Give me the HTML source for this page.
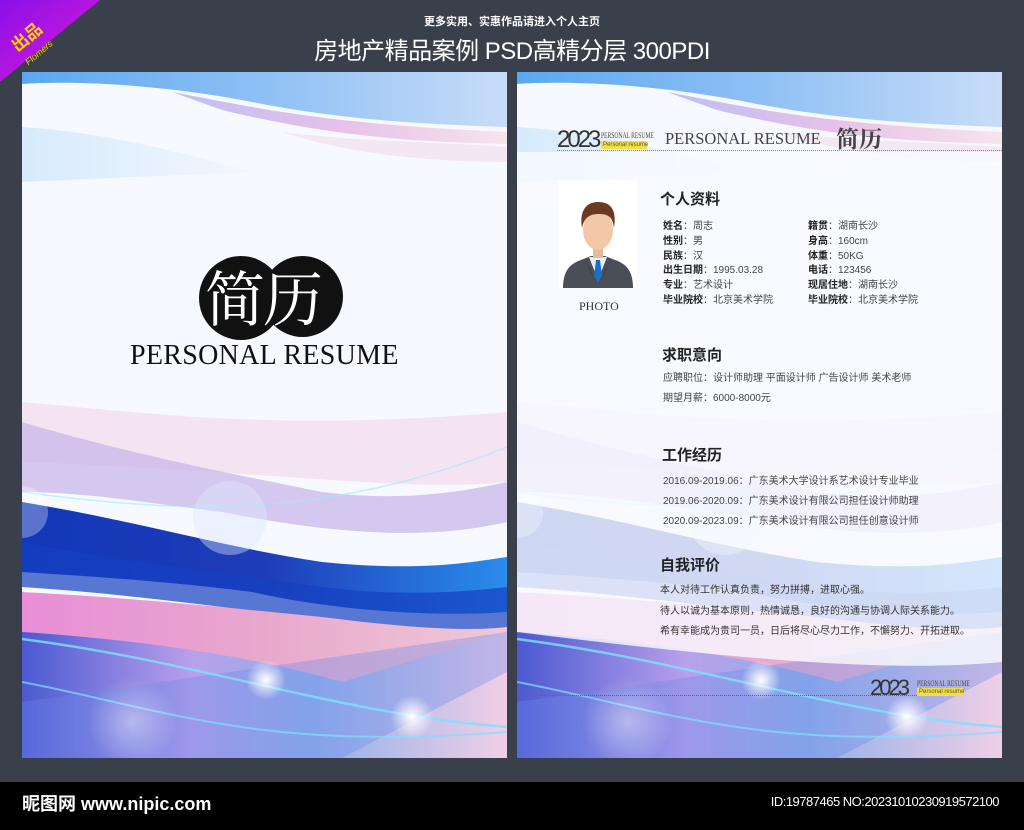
<!DOCTYPE html>
<html><head><meta charset="utf-8">
<style>
*{margin:0;padding:0;box-sizing:border-box}
body{width:1024px;height:830px;background:#3a404b;position:relative;overflow:hidden;font-family:"Liberation Sans","Noto Sans CJK SC",sans-serif}
.abs{position:absolute;white-space:nowrap}
.panel{position:absolute;top:72px;width:485px;height:686px;overflow:hidden}
.serif{font-family:"Liberation Serif","Noto Serif CJK SC",serif}
.t{color:#444;font-size:10px}
.t b{color:#222}
.h{font-size:15px;font-weight:bold;color:#222}
</style></head><body>

<svg class="abs" style="left:0;top:0" width="110" height="90">
<defs><linearGradient id="rb" x1="0" y1="0" x2="1" y2="1"><stop offset="0" stop-color="#8a10e8"/><stop offset="1" stop-color="#e01ad8"/></linearGradient></defs>
<polygon points="0,0 100,0 0,82" fill="url(#rb)"/>
<text x="10" y="48" transform="rotate(-40 20 40)" font-size="17" font-weight="bold" fill="#ffd000" font-family="Noto Sans CJK SC">出品</text>
<text x="22" y="62" transform="rotate(-40 30 55)" font-size="9" font-style="italic" fill="#ffd000" font-family="Liberation Sans">Flomers</text>
</svg>

<div class="abs" style="left:0;width:1024px;top:13px;text-align:center;color:#fff;font-size:11px;font-weight:bold">更多实用、实惠作品请进入个人主页</div>
<div class="abs" style="left:0;width:1024px;top:31px;text-align:center;color:#fff;font-size:24px;letter-spacing:-.5px">房地产精品案例 PSD高精分层 300PDI</div>

<svg width="0" height="0" style="position:absolute">
<defs>
<linearGradient id="top" x1="0" y1="0" x2="1" y2="0"><stop offset="0" stop-color="#5aa8f0"/><stop offset=".5" stop-color="#8fc0f4"/><stop offset="1" stop-color="#c8dcf8"/></linearGradient>
<linearGradient id="pinkTop" x1="0" y1="0" x2="1" y2="0"><stop offset="0" stop-color="#a0a8f0"/><stop offset=".5" stop-color="#e0a8e0"/><stop offset="1" stop-color="#f6dce4"/></linearGradient>
<linearGradient id="dark" x1="0" y1="0" x2="1" y2="0"><stop offset="0" stop-color="#1238b8"/><stop offset=".5" stop-color="#1e3cb8"/><stop offset="1" stop-color="#2a8cec"/></linearGradient>
<linearGradient id="pinkBand" x1="0" y1="0" x2="1" y2="0"><stop offset="0" stop-color="#e88ed8"/><stop offset=".5" stop-color="#e8a8cc"/><stop offset="1" stop-color="#f0c8d8"/></linearGradient>
<linearGradient id="low" x1="0" y1="0" x2="1" y2="0"><stop offset="0" stop-color="#3050d0"/><stop offset=".35" stop-color="#b0a0f0"/><stop offset=".6" stop-color="#80b0f0"/><stop offset="1" stop-color="#f0d0e8"/></linearGradient>
<linearGradient id="soft" x1="0" y1="0" x2="1" y2="0"><stop offset="0" stop-color="#b8dcfa"/><stop offset="1" stop-color="#f0f4fc"/></linearGradient>
<radialGradient id="glow"><stop offset="0" stop-color="#fff" stop-opacity="1"/><stop offset="1" stop-color="#fff" stop-opacity="0"/></radialGradient>
<g id="bg">
<rect width="485" height="686" fill="#f6f9ff"/>
<path d="M0,0 H485 V55 C400,52 320,48 230,30 C150,14 60,8 0,12Z" fill="url(#top)"/>
<path d="M150,20 C230,35 300,52 485,60 V72 C380,70 300,62 200,38Z" fill="url(#pinkTop)" opacity=".7"/>
<path d="M0,55 C80,60 160,80 230,100 L0,110Z" fill="url(#soft)" opacity=".5"/>
<path d="M260,60 C340,70 420,70 485,75 V90 C400,90 320,80 260,60Z" fill="#f2dce8" opacity=".6"/>
<path d="M0,330 C120,340 250,360 485,340 V410 C380,420 260,400 0,390Z" fill="#f4dcec" opacity=".7"/>
<path d="M0,350 C100,380 200,400 300,420 C380,430 440,420 485,410 V450 C400,470 300,460 200,440 C120,430 60,420 0,420Z" fill="#c8b4e8" opacity=".7"/>
<path d="M0,430 C120,450 200,475 300,490 C400,500 450,490 485,485 V540 C420,545 320,540 230,520 C150,510 80,505 0,500Z" fill="url(#dark)"/>
<path d="M0,470 C100,490 200,500 300,515 C380,525 440,520 485,515 V560 C400,560 320,550 240,540 C160,530 80,520 0,515Z" fill="#1640c0" opacity=".7"/>
<path d="M0,520 C100,525 200,535 300,545 C380,555 440,560 485,555 V686 H0Z" fill="url(#pinkBand)"/>
<path d="M0,560 C150,570 250,590 320,610 L485,560 V686 H0Z" fill="url(#low)" opacity=".85"/>
<path d="M0,630 L0,686 H320 L485,600 V560Z" fill="#6a8ae8" opacity=".35"/>
<path d="M0,567 C100,580 180,600 270,620 C360,640 420,650 485,655" stroke="#7ee0ff" stroke-width="2.5" fill="none" opacity=".8"/>
<path d="M0,610 C80,625 160,650 260,660 C340,668 420,665 485,660" stroke="#7ee0ff" stroke-width="2" fill="none" opacity=".7"/>
<path d="M0,420 C150,440 300,450 485,375" stroke="#9ee8ff" stroke-width="1.5" fill="none" opacity=".6"/>
<circle cx="208" cy="446" r="37" fill="#dde8ff" opacity=".4"/>
<circle cx="0" cy="440" r="26" fill="#fff" opacity=".3"/>
<circle cx="244" cy="608" r="20" fill="url(#glow)"/>
<circle cx="390" cy="645" r="22" fill="url(#glow)"/>
<circle cx="110" cy="650" r="45" fill="url(#glow)" opacity=".4"/>
</g>
</defs></svg>

<div class="panel" style="left:22px"><svg width="485" height="686"><use href="#bg"/></svg></div>
<div class="panel" style="left:517px"><svg width="485" height="686"><use href="#bg"/>
<path d="M0,80 H485 V590 C380,600 240,590 0,560Z" fill="#f8faff" opacity=".82"/></svg></div>

<div class="abs" style="left:199px;top:256px;width:84px;height:84px;border-radius:50%;background:#111"></div>
<div class="abs" style="left:262px;top:256px;width:81px;height:81px;border-radius:50%;background:#111"></div>
<div class="abs" style="left:205px;top:260px;font-size:60px;line-height:72px;color:#fff;font-family:'Noto Serif CJK SC',serif;letter-spacing:-2px">简历</div>
<div class="abs serif" style="left:130px;top:340px;font-size:28px;color:#111;letter-spacing:.3px">PERSONAL RESUME</div>

<div class="abs" style="left:557px;top:126px;font-size:24px;color:#333;letter-spacing:-3px">2023</div>
<div class="abs serif" style="left:601px;top:131px;font-size:8px;color:#444;transform:scaleX(.7);transform-origin:left">PERSONAL RESUME</div>
<div class="abs" style="left:601px;top:141px;width:46px;height:8px;background:#f2e040;font-size:6px;color:#555;line-height:8px;padding-left:2px">Personal resume</div>
<div class="abs serif" style="left:665px;top:129px;font-size:16.5px;color:#444">PERSONAL RESUME</div>
<div class="abs" style="left:836px;top:121px;font-size:23px;font-weight:bold;color:#444;font-family:'Noto Serif CJK SC',serif">简历</div>
<div class="abs" style="left:557px;top:150px;width:445px;border-top:1px dotted #888"></div>

<div class="abs" style="left:559px;top:180px;width:78px;height:108px;background:#fff"></div>
<svg class="abs" style="left:559px;top:180px" width="78" height="108">
<path d="M4,108 C4,92 10,84 22,80 L32,76 L46,76 L56,80 C68,84 74,92 74,108Z" fill="#4a4e56"/>
<path d="M30,77 L39,100 L48,77Z" fill="#e8f0f8"/>
<path d="M37,80 L41,80 L43,96 L39,102 L35,96Z" fill="#1a70c8"/>
<path d="M26,78 L38,104 L30,88Z" fill="#2e3238"/><path d="M52,78 L40,104 L48,88Z" fill="#2e3238"/>
<rect x="34" y="66" width="10" height="12" fill="#e8b898"/>
<ellipse cx="39" cy="50" rx="15" ry="20" fill="#f2c8a8"/>
<path d="M23,48 C20,30 28,22 39,22 C52,22 58,30 55,48 C54,38 50,34 40,34 C30,34 25,38 23,48Z" fill="#6a3a22"/>
</svg>
<div class="abs serif" style="left:579px;top:299px;font-size:12px;color:#333">PHOTO</div>

<div class="abs h" style="left:660px;top:188px">个人资料</div>
<div class="abs t" style="left:663px;top:220px;line-height:14.8px">
<b>姓名</b>：周志<br><b>性别</b>：男<br><b>民族</b>：汉<br><b>出生日期</b>：1995.03.28<br><b>专业</b>：艺术设计<br><b>毕业院校</b>：北京美术学院</div>
<div class="abs t" style="left:808px;top:220px;line-height:14.8px">
<b>籍贯</b>：湖南长沙<br><b>身高</b>：160cm<br><b>体重</b>：50KG<br><b>电话</b>：123456<br><b>现居住地</b>：湖南长沙<br><b>毕业院校</b>：北京美术学院</div>

<div class="abs h" style="left:662px;top:344px">求职意向</div>
<div class="abs t" style="left:663px;top:369px;line-height:20px">应聘职位：设计师助理 平面设计师 广告设计师 美术老师<br>期望月薪：6000-8000元</div>

<div class="abs h" style="left:662px;top:444px">工作经历</div>
<div class="abs t" style="left:663px;top:472px;line-height:20px">2016.09-2019.06：广东美术大学设计系艺术设计专业毕业<br>2019.06-2020.09：广东美术设计有限公司担任设计师助理<br>2020.09-2023.09：广东美术设计有限公司担任创意设计师</div>

<div class="abs h" style="left:660px;top:554px">自我评价</div>
<div class="abs t" style="left:660px;top:581px;line-height:20.5px;color:#333">本人对待工作认真负责，努力拼搏，进取心强。<br>待人以诚为基本原则，热情诚恳，良好的沟通与协调人际关系能力。<br>希有幸能成为贵司一员，日后将尽心尽力工作，不懈努力、开拓进取。</div>

<div class="abs" style="left:517px;top:695px;width:420px;border-top:1px dotted #666"></div>
<div class="abs" style="left:870px;top:675px;font-size:22px;color:#333;letter-spacing:-3px">2023</div>
<div class="abs serif" style="left:917px;top:679px;font-size:8px;color:#444;transform:scaleX(.7);transform-origin:left">PERSONAL RESUME</div>
<div class="abs" style="left:917px;top:688px;width:46px;height:8px;background:#f2e040;font-size:6px;color:#555;line-height:8px;padding-left:2px">Personal resume</div>

<div class="abs" style="left:0;top:782px;width:1024px;height:48px;background:#000"></div>
<div class="abs" style="left:22px;top:790px;color:#fff;font-size:18px;font-weight:bold">昵图网 www.nipic.com</div>
<div class="abs" style="right:25px;top:794px;color:#fff;font-size:13px;letter-spacing:-.5px">ID:19787465 NO:20231010230919572100</div>
</body></html>
